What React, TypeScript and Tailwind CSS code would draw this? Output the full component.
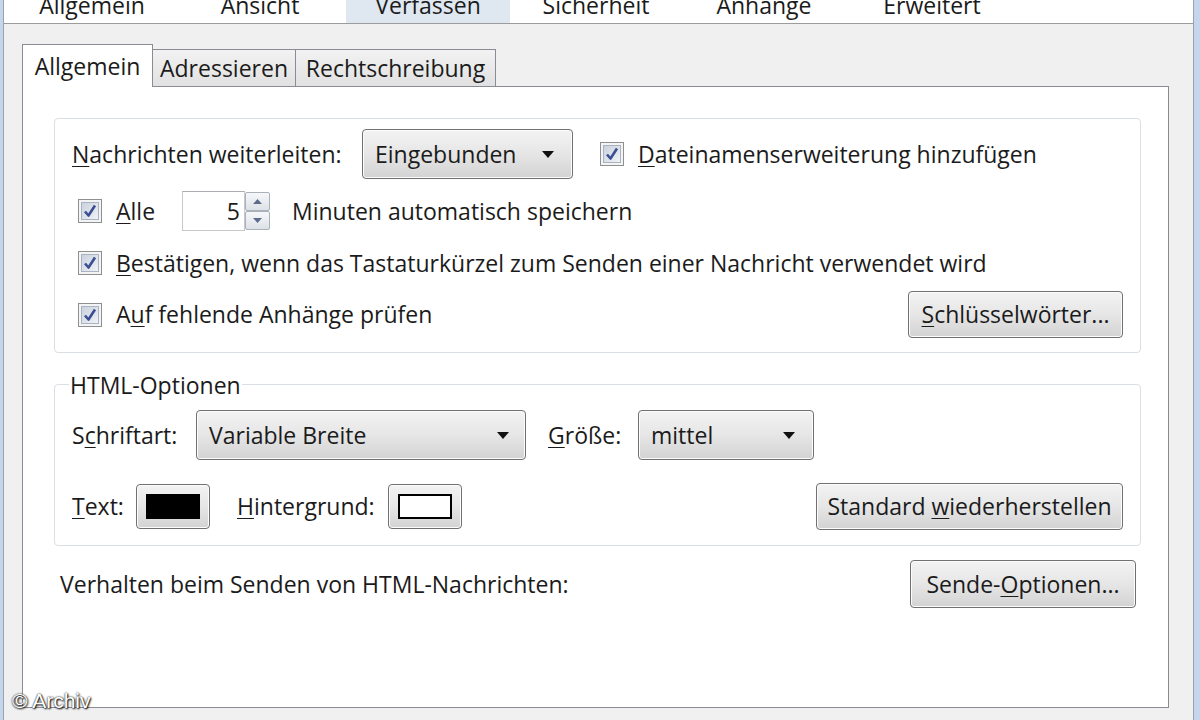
import React from "react";

const F = "font-['Open_Sans',sans-serif]";

function U({ children }: { children: React.ReactNode }) {
  return <span className="underline underline-offset-[3px] decoration-1">{children}</span>;
}

function Check() {
  return (
    <svg width="24" height="24" viewBox="0 0 24 24" className="shrink-0">
      <defs>
        <linearGradient id="cbg" x1="0" y1="0" x2="1" y2="1">
          <stop offset="0" stopColor="#c9d1dd" />
          <stop offset="1" stopColor="#f1f3f6" />
        </linearGradient>
      </defs>
      <rect x="0.5" y="0.5" width="23" height="23" fill="#f4f4f4" stroke="#8e8f8f" />
      <rect x="3.5" y="3.5" width="17" height="17" fill="url(#cbg)" stroke="#aab3c2" />
      <path d="M7 12.5 L10.5 16.5 L17 6.5" fill="none" stroke="#3b4f93" strokeWidth="2.6" strokeLinejoin="round" />
    </svg>
  );
}

function Tri() {
  return (
    <svg width="12" height="7" viewBox="0 0 12 7" className="shrink-0">
      <path d="M0 0 H12 L6 7 Z" fill="#111" />
    </svg>
  );
}

const btn =
  "rounded-[4px] border border-[#707070] bg-linear-to-b from-[#f3f3f3] via-[#e6e6e6] to-[#d3d3d3] shadow-[inset_0_0_0_1px_#fcfcfc]";

function Dropdown({ w, text, pr }: { w: string; text: string; pr: string }) {
  return (
    <div className={`${w} h-[50px] ${btn} flex items-center pl-[12px] ${pr}`}>
      <span className="flex-1 whitespace-nowrap">{text}</span>
      <Tri />
    </div>
  );
}

function Button({ w, h, children }: { w: string; h: string; children: React.ReactNode }) {
  return <div className={`${w} ${h} ${btn} flex items-center justify-center shrink-0 whitespace-nowrap`}>{children}</div>;
}

function ColorBtn({ fill }: { fill: "black" | "white" }) {
  return (
    <div className={`w-[74px] h-[45px] ${btn} flex items-center justify-center shrink-0`}>
      {fill === "black" ? (
        <div className="w-[54px] h-[25px] bg-black" />
      ) : (
        <div className="w-[54px] h-[25px] bg-white border-2 border-black" />
      )}
    </div>
  );
}

export default function App() {
  const topTabs = ["Allgemein", "Ansicht", "Verfassen", "Sicherheit", "Anhänge", "Erweitert"];
  return (
    <div className={`${F} w-[1200px] h-[720px] overflow-hidden bg-[#f0f0f0] text-[#1b1b1b] text-[23px] relative flex`}>
      {/* left window border */}
      <div className="w-[3px] bg-[#c3d6ec] shrink-0" />
      <div className="w-[1px] bg-[#9aa3ad] shrink-0" />
      <div className="flex-1 flex flex-col">
        {/* top tabs strip */}
        <div className="h-[24px] bg-white border-b border-[#9c9c9c] flex pl-[4px] overflow-hidden shrink-0">
          {topTabs.map((t) => (
            <div key={t} className="w-[168px] h-[23px] flex justify-center px-[2px]">
              <div className={`w-full flex justify-center ${t === "Verfassen" ? "bg-[#dfe7f1]" : ""}`}>
                <span className="leading-[24px] text-[23px] -mt-[7px]">{t}</span>
              </div>
            </div>
          ))}
        </div>
        {/* body */}
        <div className="pl-[18px] pt-[20px]">
          <div className="flex items-end h-[43px] relative z-10 -mb-px">
            <div className="w-[131px] h-[43px] bg-white border border-b-0 border-[#898c95] flex items-center justify-center">
              Allgemein
            </div>
            <div className="w-[143px] h-[38px] bg-linear-to-b from-[#f2f2f2] to-[#e1e1e1] border border-l-0 border-[#898c95] flex items-center justify-center">
              Adressieren
            </div>
            <div className="w-[200px] h-[38px] bg-linear-to-b from-[#f2f2f2] to-[#e1e1e1] border border-l-0 border-[#898c95] flex items-center justify-center">
              Rechtschreibung
            </div>
          </div>
          <div className="w-[1147px] h-[622px] bg-white border border-[#898c95] pl-[31px] pt-[31px]">
            {/* group 1 */}
            <div className="w-[1087px] border border-[#d9dfe4] rounded-[4px] pl-[17px] pr-[17px] pt-[10px] pb-[14px] flex flex-col">
              <div className="h-[50px] flex items-center whitespace-nowrap">
                <div className="w-[290px]">
                  <U>N</U>achrichten weiterleiten:
                </div>
                <Dropdown w="w-[211px]" text="Eingebunden" pr="pr-[18px]" />
                <div className="ml-[27px]">
                  <Check />
                </div>
                <span className="ml-[14px]">
                  <U>D</U>ateinamenserweiterung hinzufügen
                </span>
              </div>
              <div className="mt-[12px] h-[40px] flex items-center pl-[6px] whitespace-nowrap">
                <Check />
                <div className="ml-[14px] w-[66px]">
                  <U>A</U>lle
                </div>
                <div className="w-[63px] h-[40px] bg-white border border-[#c6c8cc] border-t-[#abadb3] flex items-center justify-end pr-[4px]">
                  5
                </div>
                <div className="w-[25px] h-[40px] flex flex-col py-[1px]">
                  <div className="flex-1 border border-[#a9b1bb] rounded-[2px] bg-linear-to-b from-[#f6f7f9] to-[#dde2e8] flex items-center justify-center">
                    <svg width="9" height="5" viewBox="0 0 9 5">
                      <path d="M0 5 L4.5 0 L9 5 Z" fill="#5a6c8c" />
                    </svg>
                  </div>
                  <div className="flex-1 border border-[#a9b1bb] rounded-[2px] bg-linear-to-b from-[#f6f7f9] to-[#dde2e8] flex items-center justify-center">
                    <svg width="9" height="5" viewBox="0 0 9 5">
                      <path d="M0 0 L9 0 L4.5 5 Z" fill="#5a6c8c" />
                    </svg>
                  </div>
                </div>
                <span className="ml-[22px]">Minuten automatisch speichern</span>
              </div>
              <div className="mt-[10px] h-[44px] flex items-center pl-[6px] whitespace-nowrap">
                <Check />
                <span className="ml-[14px]">
                  <U>B</U>estätigen, wenn das Tastaturkürzel zum Senden einer Nachricht verwendet wird
                </span>
              </div>
              <div className="mt-[6px] h-[47px] flex items-center pl-[6px] whitespace-nowrap">
                <Check />
                <span className="ml-[14px] flex-1">
                  A<U>u</U>f fehlende Anhänge prüfen
                </span>
                <Button w="w-[215px]" h="h-[47px]">
                  <span>
                    <U>S</U>chlüsselwörter...
                  </span>
                </Button>
              </div>
            </div>

            {/* group 2 */}
            <div className="mt-[31px] w-[1087px] border border-[#d9dfe4] rounded-[4px] pl-[17px] pr-[17px] pb-[15px] flex flex-col">
              <div className="-mt-[13px] h-[26px] leading-[26px] ml-[-3px] px-[1px] w-fit bg-white">
                HTML-Optionen
              </div>
              <div className="mt-[12px] h-[50px] flex items-center whitespace-nowrap">
                <div className="w-[124px]">
                  S<U>c</U>hriftart:
                </div>
                <Dropdown w="w-[330px]" text="Variable Breite" pr="pr-[16px]" />
                <div className="ml-[22px] w-[90px]">
                  <U>G</U>röße:
                </div>
                <Dropdown w="w-[176px]" text="mittel" pr="pr-[18px]" />
              </div>
              <div className="mt-[23px] h-[47px] flex items-center whitespace-nowrap">
                <div className="w-[64px]">
                  <U>T</U>ext:
                </div>
                <ColorBtn fill="black" />
                <div className="ml-[27px] w-[151px]">
                  <U>H</U>intergrund:
                </div>
                <ColorBtn fill="white" />
                <div className="flex-1" />
                <Button w="w-[307px]" h="h-[47px]">
                  <span>
                    Standard <U>w</U>iederherstellen
                  </span>
                </Button>
              </div>
            </div>

            {/* send options */}
            <div className="mt-[14px] w-[1087px] h-[48px] flex items-center pl-[6px] pr-[5px] whitespace-nowrap">
              <span className="flex-1">Verhalten beim Senden von HTML-Nachrichten:</span>
              <Button w="w-[226px]" h="h-[48px]">
                <span>
                  Sende-<U>O</U>ptionen...
                </span>
              </Button>
            </div>
          </div>
        </div>
      </div>
      {/* right window border */}
      <div className="w-[1px] bg-[#9aa3ad] shrink-0" />
      <div className="w-[6px] bg-[#c3d6ec] shrink-0" />

      <div className="absolute left-[12px] bottom-[9px] font-['Liberation_Sans',sans-serif] text-[21px] leading-none text-white [text-shadow:0_0_2px_#000,1px_1px_2px_#000]">
        © Archiv
      </div>
    </div>
  );
}
